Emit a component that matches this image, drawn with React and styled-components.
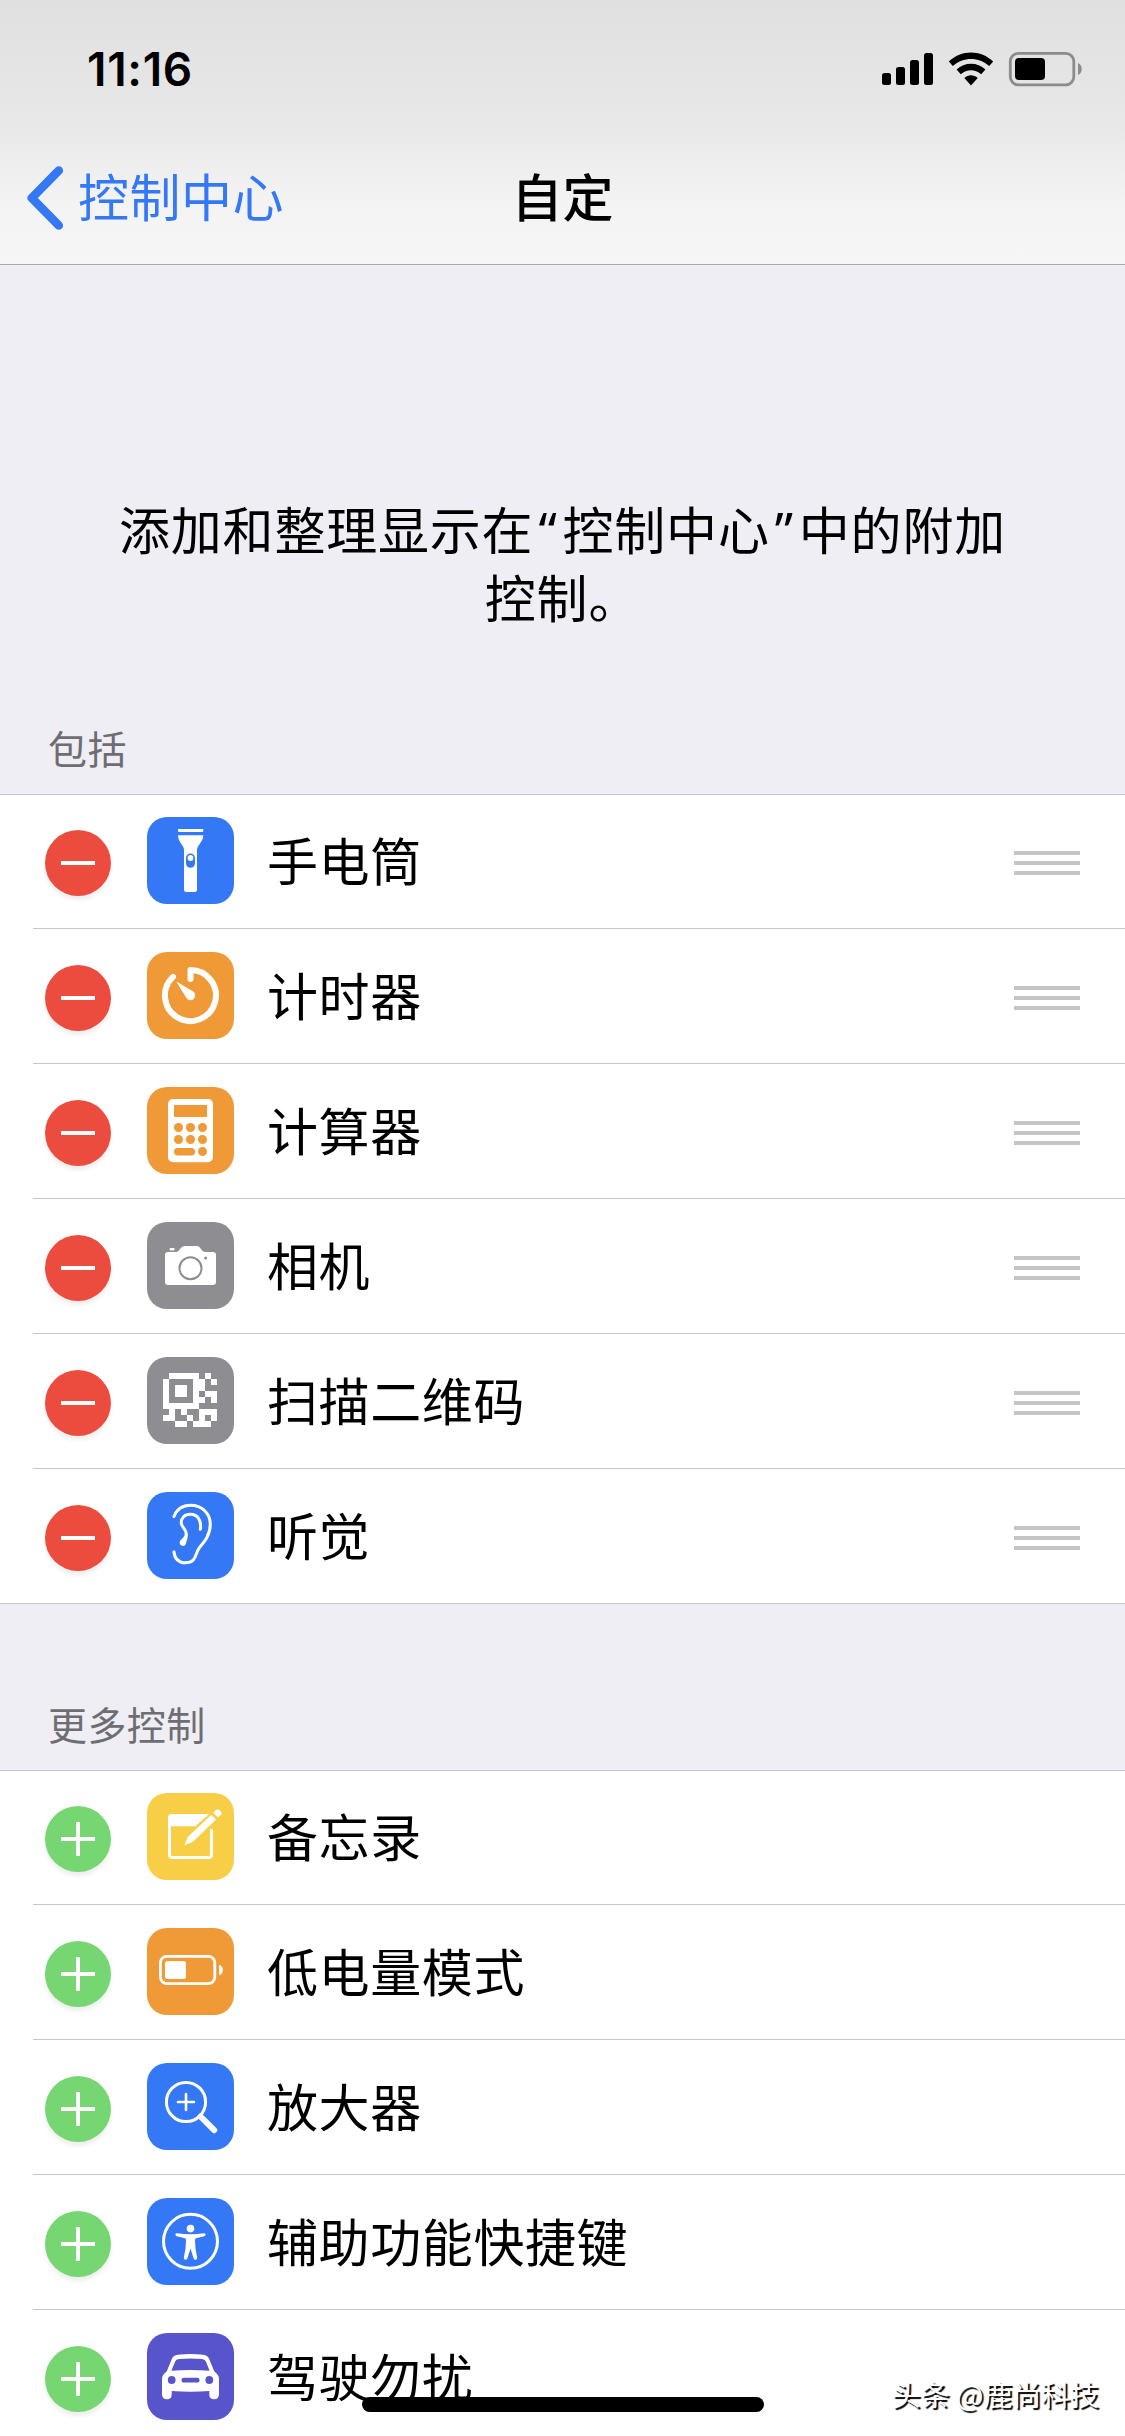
import React from 'react'
import styled, { createGlobalStyle } from 'styled-components'

const GlobalStyle = createGlobalStyle`
    body {
        margin: 0;
        background: #efeef4;
        font-family: "Noto Sans CJK SC", sans-serif;
        color: #000;
    }
`;

const colors = {
    blue: '#3478f6',
    orange: '#ef9a37',
    gray: '#8e8d92',
    yellow: '#f8ce47',
    purple: '#5855cc',
    red: '#eb4c3d',
    green: '#75d672',
    line: '#c6c6c8',
}

const Screen = styled.div`
    position: relative;
    width: 1125px;
    height: 2436px;
    overflow: hidden;
    background: #efeef4;
`;

const Header = styled.header`
    height: 264px;
    border-bottom: 1px solid #a9a9ac;
    background: linear-gradient(#e0e0e0 0, #e6e6e6 100px, #e9e9e9 130px, #f3f3f3 200px, #f6f6f6 264px);
`;

const StatusBar = styled.div`
    display: flex;
    justify-content: space-between;
    align-items: center;
    box-sizing: border-box;
    height: 132px;
    padding: 6px 43px 0 87px;
`;

const Time = styled.time`
    font-family: "Inter", sans-serif;
    font-size: 46px;
    font-weight: 600;
    line-height: 54px;
    letter-spacing: 0.7px;
`;

const NavBar = styled.nav`
    display: grid;
    grid-template-columns: 1fr auto 1fr;
    align-items: center;
    height: 132px;
    line-height: 72px;
`;

const BackLink = styled.a`
    display: flex;
    align-items: center;
    gap: 12px;
    padding-left: 26px;
    color: ${colors.blue};
`;

const BackText = styled.span`
    padding-bottom: 6px;
    font-size: 51px;
    letter-spacing: 0.5px;
`;

const Title = styled.h1`
    margin: 0;
    padding-bottom: 6px;
    font-size: 51px;
    font-weight: 500;
    line-height: 72px;
`;

const Intro = styled.p`
    margin: 0;
    padding: 230px 100px 0;
    height: 206px;
    font-size: 51px;
    line-height: 66px;
    letter-spacing: 0.8px;
    text-align: center;
`;

const Quote = styled.span`
    margin: 0 5px;
    font-family: "Noto Sans", sans-serif;
`;

const SectionLabel = styled.h2`
    display: flex;
    align-items: flex-end;
    box-sizing: border-box;
    height: ${({ $height }) => $height}px;
    margin: 0;
    padding: 0 0 19px 48px;
    font-size: 39px;
    font-weight: 400;
    line-height: 56px;
    letter-spacing: 0.4px;
    color: #6d6d72;
`;

const List = styled.ul`
    margin: 0;
    padding: 0;
    list-style: none;
    background: #fff;
    border-top: 1px solid ${colors.line};
    border-bottom: 1px solid ${colors.line};
`;

const Row = styled.li`
    display: flex;
    height: 134px;
    margin-left: 33px;
    padding-left: 12px;
    border-bottom: 1px solid ${colors.line};

    &:first-child {
        height: 133px;
    }

    &:first-child > * {
        margin-top: -1px;
    }

    &:last-child {
        border-bottom: 0;
    }
`;

const Toggle = styled.button`
    flex: none;
    display: grid;
    place-items: center;
    width: 66px;
    height: 66px;
    padding: 0;
    border: 0;
    border-radius: 50%;
    background: ${({ $color }) => $color};
    box-shadow: 0 4px 4px rgba(0, 0, 0, 0.07);
    transform: translateY(36px);
`;

const Tile = styled.span`
    flex: none;
    width: 87px;
    height: 87px;
    margin-left: 36px;
    border-radius: 20px;
    background: ${({ $color }) => $color};
    color: ${({ $color }) => $color};
    transform: translateY(23px);

    svg {
        display: block;
    }
`;

const Name = styled.span`
    flex: 1;
    padding-left: 33px;
    font-size: 51px;
    line-height: 130px;
    letter-spacing: 0.6px;
    white-space: nowrap;
`;

const Grip = styled.span`
    display: flex;
    flex-direction: column;
    justify-content: center;
    gap: 6px;
    width: 66px;
    height: 138px;
    margin-right: 45px;

    i {
        height: 4px;
        background: #c5c5c5;
    }
`;

const HomeIndicator = styled.div`
    position: absolute;
    left: 362px;
    bottom: 24px;
    width: 402px;
    height: 15px;
    border-radius: 8px;
    background: #000;
`;

const Watermark = styled.div`
    position: absolute;
    right: 26px;
    bottom: 22px;
    font-size: 28.9px;
    line-height: 42px;
    color: #fff;
    text-shadow: 2px 2px 1px #000;
    white-space: nowrap;
`;

const StatusIcons = () => (
    <svg width="201" height="36" viewBox="881 51 201 36">
        <rect x="882" y="73" width="9" height="12" rx="2.5" />
        <rect x="896" y="67" width="9" height="18" rx="2.5" />
        <rect x="910" y="60" width="9" height="25" rx="2.5" />
        <rect x="924" y="53" width="9" height="32" rx="2.5" />
        <path d="M948.8 61.6C961 49.4 981 49.4 993.2 61.6L989.2 66C979 56.6 963 56.6 952.8 66Z" />
        <path d="M956.6 69.5C964.6 61.8 977.4 61.8 985.4 69.5L981.2 74.3C975 68.9 967 68.9 960.8 74.3Z" />
        <path d="M964.3 77.9C968.2 74.4 973.8 74.4 977.7 77.9L971 85.4Z" />
        <rect x="1010.3" y="53.3" width="63.5" height="31.5" rx="8" fill="none" stroke="#8b8b8b" strokeWidth="2.8" />
        <rect x="1015" y="58" width="30" height="22" rx="4" />
        <path d="M1078 63C1083 65 1083 73 1078 75Z" fill="#8b8b8b" />
    </svg>
)

const BackIcon = () => (
    <svg width="40" height="66" viewBox="0 0 40 66" fill="none" stroke="currentColor" strokeWidth="8.6" strokeLinecap="round" strokeLinejoin="round">
        <path d="M32.8 5.5L5.8 33L32.8 60.5" />
    </svg>
)

const Glyph = ({ children }) => (
    <svg width="87" height="87" viewBox="0 0 87 87" fill="#fff">{children}</svg>
)

const Flashlight = () => (
    <Glyph>
        <path d="M31 12H56.3V14Q56.3 15 55.3 15H32Q31 15 31 14Z" />
        <path d="M31 18.3H56.3Q56.3 22 54 25L51 29.5Q50 31 50 33V72.5Q50 75 47.5 75H39.5Q37 75 37 72.5V33Q37 31 36 29.5L33 25Q31 22 31 18.3Z" />
        <rect x="39" y="36.5" width="9" height="14.2" rx="4.5" fill="currentColor" />
        <circle cx="43.5" cy="41" r="2.9" />
    </Glyph>
)

const Timer = () => (
    <Glyph>
        <path d="M43.5 27V18A25.5 25.5 0 1 1 26 24.9" fill="none" stroke="#fff" strokeWidth="6" strokeLinecap="round" strokeLinejoin="round" />
        <path d="M30.2 30L46.6 39.8A4.8 4.8 0 1 1 39.6 46.3L29.8 30.6Q29.7 29.8 30.2 30Z" />
    </Glyph>
)

const Calculator = () => (
    <Glyph>
        <rect x="21" y="12" width="45" height="63.3" rx="5" />
        <g fill="currentColor">
            <rect x="27" y="18" width="33" height="12" />
            {[40.5, 52.5].map((y) => [31.5, 43.5, 55.5].map((x) => (
                <circle key={`${x}-${y}`} cx={x} cy={y} r="4.5" />
            )))}
            <rect x="27" y="61" width="21" height="7.4" rx="3.7" />
            <circle cx="55.5" cy="64.5" r="4.5" />
        </g>
    </Glyph>
)

const Camera = () => (
    <Glyph>
        <path d="M18 33Q18 30 21 30H29C33 30 33 24 38 24H49.5C54.5 24 53.5 30 58.5 30H66Q69 30 69 33V60Q69 63 66 63H21Q18 63 18 60Z" />
        <rect x="22.6" y="26" width="5" height="2.6" rx="1" />
        <circle cx="43.5" cy="46.3" r="11" fill="none" stroke="currentColor" strokeWidth="2" />
        <circle cx="58.6" cy="36" r="1.5" fill="currentColor" />
    </Glyph>
)

const qrRows = [
    '011111010',
    '100001101',
    '101101100',
    '101101011',
    '100001101',
    '111111000',
    '010100111',
    '110010101',
    '001101110',
]

const QrCode = () => (
    <Glyph>
        <g shapeRendering="crispEdges">
            {qrRows.map((row, y) => row.split('').map((cell, x) => cell === '1' && (
                <rect key={`${x}-${y}`} x={16 + x * 6} y={16 + y * 6} width="6" height="6" />
            )))}
        </g>
    </Glyph>
)

const Ear = () => (
    <Glyph>
        <g fill="none" stroke="#fff" strokeWidth="3" strokeLinecap="round">
            <path d="M27 24.5C30 17 36 13.3 43.5 13.3C55 13.3 63.3 21.5 63.3 32C63.3 43 57.5 49.5 52.5 55.5C48 61 50 70.8 38.3 70.8C31.5 70.8 27 66 27 59.8" />
            <path d="M53.3 37.3C54.8 29 51 22.3 43.3 22.3C37.5 22.3 34.2 26 34.2 30.5C34.2 35.5 39.3 36.5 39.3 42.5" />
        </g>
        <path d="M40.8 42C41 46 39.6 49 38.9 51.7A3.2 3.2 0 0 1 32.7 50.3C33.5 46.8 37.4 46 37.9 42Z" />
    </Glyph>
)

const Notes = () => (
    <Glyph>
        <path d="M64.5 36V61.5Q64.5 64.5 61.5 64.5H25.5Q22.5 64.5 22.5 61.5V25.5Q22.5 22.5 25.5 22.5H60" fill="none" stroke="#fff" strokeWidth="3" />
        <path d="M21 25Q21 21 25 21H62L48.5 33.3H21Z" />
        <path d="M37.3 52.3L41 43.8L64.3 21.8L69 26.4L46 48.8Z" stroke="currentColor" strokeWidth="3.4" paintOrder="stroke" />
        <path d="M66.4 20L68.2 17.7Q70.6 15.2 73.2 17.7Q75.8 20.3 73.2 22.8L71 24.6Z" />
    </Glyph>
)

const LowPower = () => (
    <Glyph>
        <rect x="13.4" y="28.4" width="54.4" height="27.2" rx="6.5" fill="none" stroke="#fff" strokeWidth="2.8" />
        <rect x="18" y="33" width="21" height="18" rx="2.5" />
        <path d="M72 36.8Q75.8 37.6 75.8 42Q75.8 46.4 72 47.2Z" />
    </Glyph>
)

const Magnifier = () => (
    <Glyph>
        <g fill="none" stroke="#fff" strokeLinecap="round">
            <circle cx="39" cy="39" r="19.6" strokeWidth="3" />
            <path d="M31 39H47M39 31V47" strokeWidth="2.6" />
            <path d="M53.5 53.5L67.2 67.2" strokeWidth="6" />
        </g>
    </Glyph>
)

const Accessibility = () => (
    <Glyph>
        <circle cx="43.5" cy="43.3" r="27" fill="none" stroke="#fff" strokeWidth="3" />
        <circle cx="43.5" cy="30.6" r="3.8" />
        <path d="M30 35.2Q43.5 37.5 57 35.2Q58.6 35.2 58.6 36.6Q58.6 37.8 57.3 38.2L49 40.2Q48 40.5 48 42.5Q48 51 50.2 59.5Q50.4 61.3 48.8 61.7Q47.2 61.9 46.6 60.2L43.5 50.5L40.4 60.2Q39.8 61.9 38.2 61.7Q36.6 61.3 36.8 59.5Q39 51 39 42.5Q39 40.5 38 40.2L29.7 38.2Q28.4 37.8 28.4 36.6Q28.4 35.2 30 35.2Z" />
    </Glyph>
)

const Car = () => (
    <Glyph>
        <path d="M31 21.7Q43.5 20.3 56 21.7Q60.7 22.2 62.2 26L67.2 38.2L70.5 41.5Q72 43 72 46V61.3Q72 66.3 67.1 66.3Q62.3 66.3 62.3 61.5V58Q43.5 59.3 24.7 58V61.5Q24.7 66.3 19.9 66.3Q15 66.3 15 61.3V46Q15 43 16.5 41.5L19.8 38.2L24.8 26Q26.3 22.2 31 21.7Z" />
        <g fill="currentColor">
            <path d="M32 26Q43.5 24.8 55 26Q58 26.3 59 28.8L62.6 37.8Q43.5 36.2 24.4 37.8L28 28.8Q29 26.3 32 26Z" />
            <circle cx="24.7" cy="47" r="3.9" />
            <circle cx="62.3" cy="47" r="3.9" />
            <rect x="34.5" y="44.8" width="18" height="4.8" rx="2.2" />
        </g>
    </Glyph>
)

const included = [
    { name: '手电筒', color: colors.blue, icon: Flashlight },
    { name: '计时器', color: colors.orange, icon: Timer },
    { name: '计算器', color: colors.orange, icon: Calculator },
    { name: '相机', color: colors.gray, icon: Camera },
    { name: '扫描二维码', color: colors.gray, icon: QrCode },
    { name: '听觉', color: colors.blue, icon: Ear },
]

const more = [
    { name: '备忘录', color: colors.yellow, icon: Notes },
    { name: '低电量模式', color: colors.orange, icon: LowPower },
    { name: '放大器', color: colors.blue, icon: Magnifier },
    { name: '辅助功能快捷键', color: colors.blue, icon: Accessibility },
    { name: '驾驶勿扰', color: colors.purple, icon: Car },
]

const ControlRow = ({ name, color, icon: Icon, removable }) => (
    <Row>
        <Toggle $color={removable ? colors.red : colors.green} aria-label={removable ? '移除' : '添加'}>
            <svg width="34" height="34" viewBox="0 0 34 34" stroke="#fff" strokeWidth="4">
                <path d={removable ? 'M0 17H34' : 'M0 17H34M17 0V34'} />
            </svg>
        </Toggle>
        <Tile $color={color}><Icon /></Tile>
        <Name>{name}</Name>
        {removable && <Grip><i /><i /><i /></Grip>}
    </Row>
)

const App = () => {
    return (
        <>
            <GlobalStyle />
            <Screen>
                <Header>
                    <StatusBar>
                        <Time>11:16</Time>
                        <StatusIcons />
                    </StatusBar>
                    <NavBar>
                        <BackLink><BackIcon /><BackText>控制中心</BackText></BackLink>
                        <Title>自定</Title>
                    </NavBar>
                </Header>
                <Intro>
                    添加和整理显示在<Quote>“</Quote>控制中心<Quote>”</Quote>中的附加<br />控制。
                </Intro>
                <SectionLabel $height={93}>包括</SectionLabel>
                <List>
                    {included.map((item) => <ControlRow key={item.name} {...item} removable />)}
                </List>
                <SectionLabel $height={166}>更多控制</SectionLabel>
                <List>
                    {more.map((item) => <ControlRow key={item.name} {...item} />)}
                </List>
                <HomeIndicator />
                <Watermark>头条 @鹿尚科技</Watermark>
            </Screen>
        </>
    );
}

export default App;
